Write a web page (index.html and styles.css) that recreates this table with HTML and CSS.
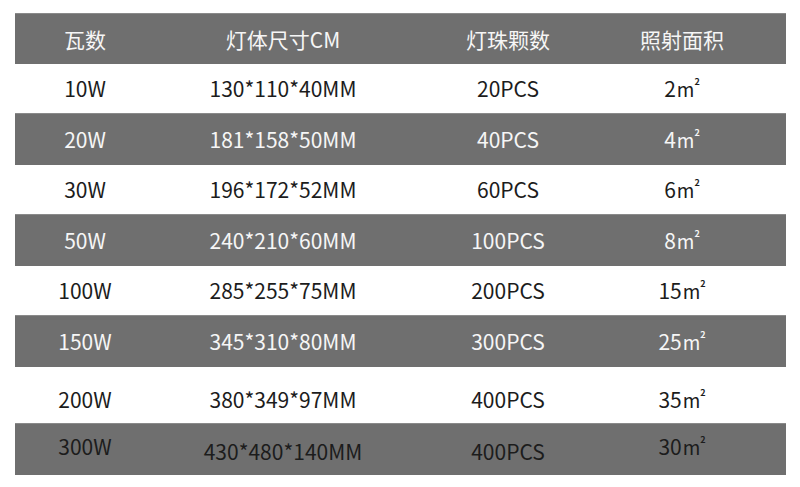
FILE: index.html
```html
<!DOCTYPE html>
<html lang="zh">
<head>
<meta charset="utf-8">
<link rel="stylesheet" href="styles.css">
</head>
<body>
<div class="spec">
  <div class="row dark head"><div>瓦数</div><div>灯体尺寸CM</div><div>灯珠颗数</div><div class="c4">照射面积</div></div>
  <div class="row"><div>10W</div><div>130*110*40MM</div><div>20PCS</div><div class="c4">2<span class="u">m</span><sup class="sq">2</sup></div></div>
  <div class="row dark"><div>20W</div><div>181*158*50MM</div><div>40PCS</div><div class="c4">4<span class="u">m</span><sup class="sq">2</sup></div></div>
  <div class="row"><div>30W</div><div>196*172*52MM</div><div>60PCS</div><div class="c4">6<span class="u">m</span><sup class="sq">2</sup></div></div>
  <div class="row dark"><div>50W</div><div>240*210*60MM</div><div>100PCS</div><div class="c4">8<span class="u">m</span><sup class="sq">2</sup></div></div>
  <div class="row"><div>100W</div><div>285*255*75MM</div><div>200PCS</div><div class="c4">15<span class="u">m</span><sup class="sq">2</sup></div></div>
  <div class="row dark"><div>150W</div><div>345*310*80MM</div><div>300PCS</div><div class="c4">25<span class="u">m</span><sup class="sq">2</sup></div></div>
  <div class="row tall"><div>200W</div><div>380*349*97MM</div><div>400PCS</div><div class="c4">35<span class="u">m</span><sup class="sq">2</sup></div></div>
  <div class="row dark last"><div class="hi">300W</div><div class="lo">430*480*140MM</div><div class="lo">400PCS</div><div class="c4 hi">30<span class="u">m</span><sup class="sq">2</sup></div></div>
</div>
</body>
</html>
```
FILE: styles.css
```css
html, body {
  margin: 0;
  padding: 0;
  background: #ffffff;
}
body {
  font-family: "Noto Sans CJK SC", "Noto Sans", sans-serif;
  font-size: 21px;
  color: #1c1c1c;
}
.spec {
  margin: 13px 0 0 15px;
  width: 771px;
  display: flex;
  flex-direction: column;
}
.row {
  display: grid;
  grid-template-columns: 140px 256px 194px 181px;
  height: 49px;
  align-items: center;
  text-align: center;
  line-height: 1;
  background: #ffffff;
}
.row > div { white-space: nowrap; }
.row .c4 { padding-right: 27px; }
.dark {
  background: #6f6f6f;
  color: #f6f6f6;
  height: 52px;
  border-top: 1px solid #8a8a8a;
  box-sizing: border-box;
}
.head { height: 51px; }
.tall { height: 56px; padding-top: 8px; box-sizing: border-box; }
.last { color: #1c1c1c; }
.last .hi { padding-bottom: 6px; }
.last .lo { padding-top: 4px; }
.u {
  margin-left: 1px;
  font-size: 19px;
}
.sq {
  font-size: 9px;
  font-weight: 700;
  vertical-align: 12px;
  line-height: 0;
}
```
